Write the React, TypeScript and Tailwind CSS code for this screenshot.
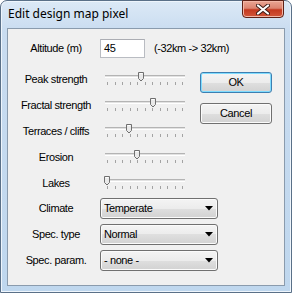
import React from "react";

const font = { fontFamily: '"Liberation Sans", Arial, sans-serif' };

function Thumb() {
  return (
    <svg width="7" height="10" viewBox="0 0 7 10" className="block">
      <path d="M0.5 0.5H5.5V6.5L3 9L0.5 6.5Z" fill="#e9e9e9" stroke="#6f6f6f" strokeWidth="1" />
      <path d="M1.5 1.5H4.5" stroke="#ffffff" strokeWidth="1" />
    </svg>
  );
}

function Slider({ pos }: { pos: number }) {
  const ticks = Array.from({ length: 11 });
  return (
    <div className="relative w-[80px] h-[26px] ml-[5px]">
      <div className="mt-[9px] h-[3px] w-[80px] border-t border-[#b4b4b4] border-b border-b-white bg-[#e2e2e2]" />
      <div className="mt-[4px] ml-[2px] w-[76px] flex justify-between">
        {ticks.map((_, i) => (
          <span key={i} className="block w-px h-[3px] bg-[#a3a3a3]" />
        ))}
      </div>
      <div className="absolute top-[6px]" style={{ left: pos - 3 }}>
        <Thumb />
      </div>
    </div>
  );
}

function Combo({ text }: { text: string }) {
  return (
    <div className="w-[118px] h-[21px] rounded-[3px] border border-[#707070] bg-[linear-gradient(to_bottom,#f4f4f4_0%,#ececec_50%,#dfdfdf_50%,#d2d2d2_100%)] shadow-[inset_0_0_0_1px_#fbfbfb] flex items-center justify-between pl-[3px] pr-[4px]">
      <span className="text-[11px] tracking-[-0.4px] text-black leading-none">{text}</span>
      <svg width="8" height="5" viewBox="0 0 8 5" className="block">
        <path d="M0 0H8L4 4.5Z" fill="#000" />
      </svg>
    </div>
  );
}

function Btn({ text, def }: { text: string; def?: boolean }) {
  return (
    <div
      className={
        "w-[72px] h-[21px] rounded-[3px] border flex items-center justify-center bg-[linear-gradient(to_bottom,#f4f4f4_0%,#ececec_50%,#dfdfdf_50%,#d2d2d2_100%)] " +
        (def
          ? "border-[#3c7fb1] shadow-[inset_0_0_0_1px_#7fdcff]"
          : "border-[#707070] shadow-[inset_0_0_0_1px_#fbfbfb]")
      }
    >
      <span className="text-[11px] tracking-[-0.4px] text-black leading-none">{text}</span>
    </div>
  );
}

function Label({ text }: { text: string }) {
  return (
    <div className="w-[88px] ml-[4px] text-center text-[11px] tracking-[-0.4px] text-black leading-none">
      {text}
    </div>
  );
}

export default function App() {
  const sliders = [
    { label: "Peak strength", pos: 36 },
    { label: "Fractal strength", pos: 48 },
    { label: "Terraces / cliffs", pos: 24 },
    { label: "Erosion", pos: 32 },
    { label: "Lakes", pos: 2 },
  ];
  const combos = [
    { label: "Climate", value: "Temperate" },
    { label: "Spec. type", value: "Normal" },
    { label: "Spec. param.", value: "- none -" },
  ];
  return (
    <div className="w-[292px] h-[293px] overflow-hidden" style={font}>
      <div className="relative w-[292px] h-[293px] rounded-t-[7px] border border-[#5a7088] bg-[linear-gradient(to_bottom,#dce9f6_0px,#c9dcf0_30px,#bfd7ee_100%)] shadow-[inset_0_0_0_1px_#eef5fc] flex flex-col">
        {/* title bar */}
        <div className="h-[27px] flex items-start pl-[7px] pt-[5px]">
          <span
            className="text-[12px] text-black leading-[16px]"
            style={{ fontFamily: '"Noto Sans", "Open Sans", sans-serif' }}
          >
            Edit design map pixel
          </span>
        </div>
        {/* close button */}
        <div className="absolute top-[-1px] right-[7px] w-[42px] h-[18px] rounded-b-[4px] border border-[#5e2116] bg-[linear-gradient(to_bottom,#eaa593_0%,#dc8470_45%,#c4391f_55%,#d2563a_100%)] shadow-[inset_0_0_0_1px_#f2b6a6] flex items-center justify-center">
          <svg width="14" height="11" viewBox="0 0 14 11">
            <path d="M2 1.5L12 9.5M12 1.5L2 9.5" stroke="#3b1b15" strokeWidth="4" strokeLinecap="round" />
            <path d="M2 1.5L12 9.5M12 1.5L2 9.5" stroke="#ffffff" strokeWidth="2.2" strokeLinecap="round" />
          </svg>
        </div>
        {/* client area */}
        <div className="mx-[6px] h-[258px] border border-[#8a9bad] bg-[#f0f0f0] flex flex-col pt-[10px]">
          {/* altitude row */}
          <div className="flex items-center h-[19px]">
            <Label text="Altitude (m)" />
            <div className="w-[45px] h-[19px] border border-[#b9bcc2] border-t-[#abadb3] bg-white flex items-center pl-[3px]">
              <span className="text-[11px] tracking-[-0.4px] text-black leading-none">45</span>
            </div>
            <span className="ml-[9px] text-[11px] tracking-[-0.4px] text-black leading-none">
              (-32km -&gt; 32km)
            </span>
          </div>
          {/* sliders + buttons */}
          <div className="flex mt-[8px]">
            <div className="flex flex-col">
              {sliders.map((s) => (
                <div key={s.label} className="flex items-center h-[26px]">
                  <Label text={s.label} />
                  <Slider pos={s.pos} />
                </div>
              ))}
            </div>
            <div className="flex flex-col ml-[15px] mt-[6px] gap-[10px]">
              <Btn text="OK" def />
              <Btn text="Cancel" />
            </div>
          </div>
          {/* combos */}
          <div className="flex flex-col gap-[5px] mt-[2px]">
            {combos.map((c) => (
              <div key={c.label} className="flex items-center h-[21px]">
                <Label text={c.label} />
                <Combo text={c.value} />
              </div>
            ))}
          </div>
        </div>
      </div>
    </div>
  );
}
